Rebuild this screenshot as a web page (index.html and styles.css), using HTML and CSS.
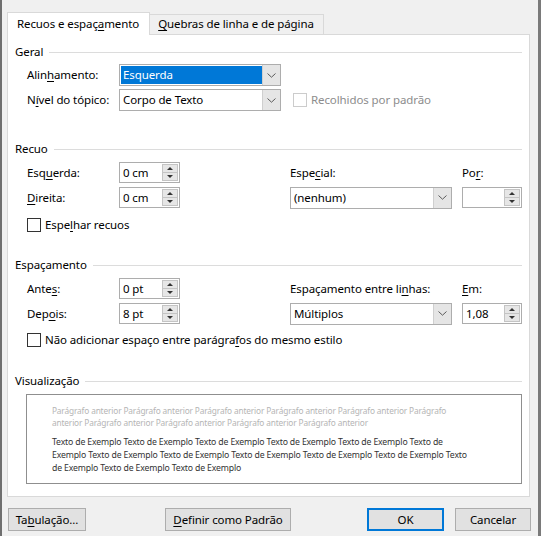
FILE: index.html
```html
<!DOCTYPE html>
<html lang="pt-BR">
<head>
    <meta charset="UTF-8">
    <title>Parágrafo</title>
    <link rel="stylesheet" href="styles.css">
</head>
<body>
    <div class="window">
        <div class="tabs">
            <div class="tab tab-active">Recuos e espaç<u>a</u>mento</div>
            <div class="tab"><u>Q</u>uebras de linha e de página</div>
        </div>

        <div class="panel">
            <!-- Geral -->
            <div class="group-title">Geral</div>
            <div class="grid grid-geral">
                <div class="label">Alin<u>h</u>amento:</div>
                <div class="select">
                    <span class="select-value selected">Esquerda</span>
                    <span class="select-arrow"><svg width="9" height="5" viewBox="0 0 9 5"><path d="M0.5 0.5 L4.5 4.2 L8.5 0.5" fill="none" stroke="#5a5a5a" stroke-width="1"/></svg></span>
                </div>
                <div></div>
                <div class="label">N<u>í</u>vel do tópico:</div>
                <div class="select">
                    <span class="select-value">Corpo de Texto</span>
                    <span class="select-arrow"><svg width="9" height="5" viewBox="0 0 9 5"><path d="M0.5 0.5 L4.5 4.2 L8.5 0.5" fill="none" stroke="#5a5a5a" stroke-width="1"/></svg></span>
                </div>
                <div class="check check-disabled"><span class="box"></span>Recolhidos por padrão</div>
            </div>

            <!-- Recuo -->
            <div class="group-title group-recuo">Recuo</div>
            <div class="grid grid-fields">
                <div class="label">Esq<u>u</u>erda:</div>
                <div class="spin"><span class="spin-value">0 cm</span><span class="spin-btns"><i class="up"></i><i class="down"></i></span></div>
                <div></div>
                <div class="label">Espe<u>c</u>ial:</div>
                <div></div>
                <div class="label">Po<u>r</u>:</div>

                <div class="label"><u>D</u>ireita:</div>
                <div class="spin"><span class="spin-value">0 cm</span><span class="spin-btns"><i class="up"></i><i class="down"></i></span></div>
                <div></div>
                <div class="select">
                    <span class="select-value">(nenhum)</span>
                    <span class="select-arrow"><svg width="9" height="5" viewBox="0 0 9 5"><path d="M0.5 0.5 L4.5 4.2 L8.5 0.5" fill="none" stroke="#5a5a5a" stroke-width="1"/></svg></span>
                </div>
                <div></div>
                <div class="spin"><span class="spin-value"></span><span class="spin-btns"><i class="up"></i><i class="down"></i></span></div>
            </div>
            <div class="check check-row check-espelhar"><span class="box"></span>Espe<u>l</u>har recuos</div>

            <!-- Espaçamento -->
            <div class="group-title group-espacamento">Espaçamento</div>
            <div class="grid grid-fields">
                <div class="label">Ante<u>s</u>:</div>
                <div class="spin"><span class="spin-value">0 pt</span><span class="spin-btns"><i class="up"></i><i class="down"></i></span></div>
                <div></div>
                <div class="label">Espaçamento entre li<u>n</u>has:</div>
                <div></div>
                <div class="label"><u>E</u>m:</div>

                <div class="label">Dep<u>o</u>is:</div>
                <div class="spin"><span class="spin-value">8 pt</span><span class="spin-btns"><i class="up"></i><i class="down"></i></span></div>
                <div></div>
                <div class="select">
                    <span class="select-value">Múltiplos</span>
                    <span class="select-arrow"><svg width="9" height="5" viewBox="0 0 9 5"><path d="M0.5 0.5 L4.5 4.2 L8.5 0.5" fill="none" stroke="#5a5a5a" stroke-width="1"/></svg></span>
                </div>
                <div></div>
                <div class="spin"><span class="spin-value">1,08</span><span class="spin-btns"><i class="up"></i><i class="down"></i></span></div>
            </div>
            <div class="check check-row check-naoadd"><span class="box"></span>Não adicionar espaço entre parágra<u>f</u>os do mesmo estilo</div>

            <!-- Visualização -->
            <div class="group-title group-visual">Visualização</div>
            <div class="preview">
                <p class="preview-prev">Parágrafo anterior Parágrafo anterior Parágrafo anterior Parágrafo anterior Parágrafo anterior Parágrafo<br>anterior Parágrafo anterior Parágrafo anterior Parágrafo anterior Parágrafo anterior</p>
                <p class="preview-text">Texto de Exemplo Texto de Exemplo Texto de Exemplo Texto de Exemplo Texto de Exemplo Texto de<br>Exemplo Texto de Exemplo Texto de Exemplo Texto de Exemplo Texto de Exemplo Texto de Exemplo Texto<br>de Exemplo Texto de Exemplo Texto de Exemplo</p>
            </div>
        </div>

        <div class="footer">
            <button class="btn btn-tab">Ta<u>b</u>ulação...</button>
            <button class="btn btn-default"><u>D</u>efinir como Padrão</button>
            <span class="spacer"></span>
            <button class="btn btn-ok">OK</button>
            <button class="btn btn-cancel">Cancelar</button>
        </div>
    </div>
</body>
</html>
```

FILE: styles.css
```css
* {
    margin: 0;
    padding: 0;
    box-sizing: border-box;
}

body {
    font-family: "Noto Sans", "Open Sans", sans-serif;
    font-size: 11.5px;
    letter-spacing: -0.1px;
    color: #000;
    background: #f0f0f0;
}

u {
    text-decoration-thickness: 1px;
    text-underline-offset: 2px;
}

.window {
    width: 541px;
    height: 536px;
    background: #f0f0f0;
    border-left: 2px solid #6f6f6f;
    border-right: 3px solid #7a7a7a;
    padding: 12px 8px 0 5px;
}

/* Tabs */
.tabs {
    display: flex;
    align-items: flex-end;
    height: 22px;
}

.tab {
    height: 20px;
    line-height: 18px;
    padding: 0 9px 0 8px;
    border: 1px solid #d9d9d9;
    border-bottom: none;
    background: #f0f0f0;
    white-space: nowrap;
}

.tab-active {
    height: 23px;
    line-height: 22px;
    padding: 0 10px 0 9px;
    background: #fff;
    margin-bottom: -1px;
    position: relative;
    z-index: 1;
}

.tab-active + .tab {
    border-left: none;
}

/* Panel */
.panel {
    height: 463px;
    background: #fff;
    border: 1px solid #d9d9d9;
    padding: 9px 7px 0 7px;
}

.group-title {
    display: flex;
    align-items: center;
    height: 16px;
    line-height: 16px;
}

.group-title::after {
    content: "";
    flex: 1;
    height: 1px;
    background: #dcdcdc;
    margin-left: 6px;
}

.group-recuo { margin-top: 30px; }
.group-espacamento { margin-top: 24px; }
.group-visual { margin-top: 25px; }

.grid {
    display: grid;
    margin-left: 12px;
    align-items: center;
}

.grid-geral {
    margin-top: 4px;
    grid-template-columns: 92px 162px auto;
    grid-template-rows: 22px 22px;
    row-gap: 3px;
}

.grid-fields {
    margin-top: 5px;
    grid-template-columns: 92px 61px 110px 162px 10px 60px;
    grid-template-rows: 21px 21px;
    row-gap: 4px;
}

.grid-fields .label {
    white-space: nowrap;
}

.label {
    line-height: 16px;
}

/* Dropdown */
.select {
    display: flex;
    height: 22px;
    border: 1px solid #adadad;
    background: #fff;
}

.select-value {
    flex: 1;
    padding-left: 2px;
    margin: 1px 0 1px 1px;
    line-height: 18px;
}

.select-value.selected {
    background: #0078d7;
    color: #fff;
}

.select-arrow {
    width: 18px;
    display: flex;
    align-items: center;
    justify-content: center;
    background: #e5e5e5;
    border-left: 1px solid #cfcfcf;
}

/* Spin box */
.spin {
    display: flex;
    height: 21px;
    border: 1px solid #adadad;
    background: #fff;
}

.spin-value {
    flex: 1;
    padding-left: 3px;
    line-height: 19px;
}

.spin-btns {
    width: 16px;
    margin: 1px;
    display: flex;
    flex-direction: column;
    background: #e6e6e6;
    border: 1px solid #c4c4c4;
}

.spin-btns i {
    flex: 1;
    display: flex;
    align-items: center;
    justify-content: center;
}

.spin-btns i + i {
    border-top: 1px solid #c4c4c4;
}

.spin-btns i::before {
    content: "";
    border-left: 3px solid transparent;
    border-right: 3px solid transparent;
}

.spin-btns .up::before {
    border-bottom: 3px solid #333;
}

.spin-btns .down::before {
    border-top: 3px solid #333;
}

/* Checkbox */
.check {
    display: flex;
    align-items: center;
    line-height: 16px;
    white-space: nowrap;
}

.check .box {
    width: 14px;
    height: 14px;
    border: 1px solid #333;
    background: #fff;
    margin-right: 4px;
}

.check-disabled {
    margin-left: 12px;
    color: #8d8d8d;
}

.check-disabled .box {
    border-color: #cccccc;
}

.check-row {
    margin-left: 12px;
}

.check-espelhar { margin-top: 9px; }
.check-naoadd { margin-top: 8px; }

/* Preview */
.preview {
    margin: 5px 0 0 11px;
    height: 90px;
    border: 1px solid #8f8f8f;
    background: #fff;
    padding: 10px 0 0 25px;
    font-family: "Liberation Sans Narrow", "Noto Sans", sans-serif;
    font-size: 8.3px;
    letter-spacing: -0.15px;
}

.preview p {
    white-space: nowrap;
    line-height: 12px;
}

.preview-prev {
    color: #b5b5b5;
    margin-bottom: 7px;
}

.preview-text {
    color: #333;
    font-size: 8.7px;
    line-height: 13px !important;
}

/* Buttons */
.footer {
    display: flex;
    margin-top: 11px;
    padding-left: 1px;
}

.btn {
    height: 23px;
    font-family: inherit;
    font-size: 11.5px;
    letter-spacing: -0.1px;
    background: #e1e1e1;
    border: 1px solid #adadad;
    color: #000;
}

.btn-tab { width: 78px; }
.btn-default { width: 126px; margin-left: 79px; }
.btn-ok {
    width: 77px;
    border-color: #0078d7;
    box-shadow: inset 0 0 0 1px #0078d7;
}
.btn-cancel { width: 76px; margin-left: 11px; margin-right: -1px; }

.spacer { flex: 1; }
```
